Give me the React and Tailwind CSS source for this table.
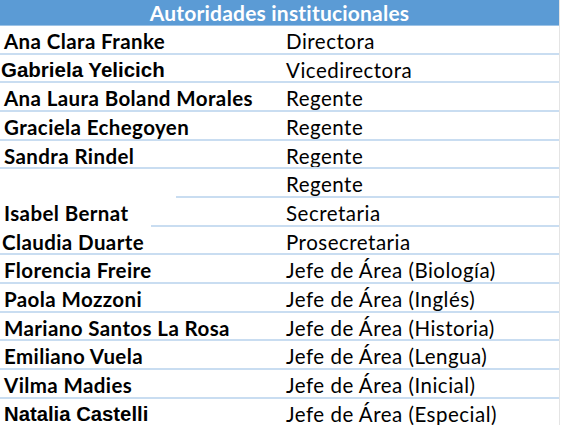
import React from 'react';

const rows = [
  { name: "Ana Clara Franke", role: "Directora" },
  { name: "Gabriela Yelicich", role: "Vicedirectora", arial: "text-[20.5px]", pl: "pl-[1px]" },
  { name: "Ana Laura Boland Morales", role: "Regente" },
  { name: "Graciela Echegoyen", role: "Regente" },
  { name: "Sandra Rindel", role: "Regente" },
  { name: "", role: "Regente", line: "ml-[176px]" },
  { name: "Isabel Bernat", role: "Secretaria", line: "ml-[151px]" },
  { name: "Claudia Duarte", role: "Prosecretaria", pl: "pl-[2px]" },
  { name: "Florencia Freire", role: "Jefe de Área (Biología)" },
  { name: "Paola Mozzoni", role: "Jefe de Área (Inglés)" },
  { name: "Mariano Santos La Rosa", role: "Jefe de Área (Historia)" },
  { name: "Emiliano Vuela", role: "Jefe de Área (Lengua)" },
  { name: "Vilma Madies", role: "Jefe de Área (Inicial)" },
  { name: "Natalia Castelli", role: "Jefe de Área (Especial)", arial: "text-[20.3px]" },
];

const App = () => {
  return (
    <div className="w-[561px] h-[425px] overflow-hidden bg-white font-['Lato',sans-serif] text-black">
      <div className="w-[560px] border-r border-[#e4e4e4]">
        <div className="h-[25px] bg-[#5b9bd5] flex items-center justify-center text-white font-bold text-[21px] tracking-[0.2px] leading-none">
          Autoridades institucionales
        </div>
        <div className="h-px bg-[#9dc3e6]" />
        {rows.map((row, i) => (
          <div key={i} className="h-[28.67px] flex flex-col">
            <div className="flex-1 flex items-end pb-[1px]">
              <div
                className={`w-[282px] shrink-0 ${row.pl || 'pl-[4px]'} font-bold leading-none ${row.arial ? `font-['Liberation_Sans',sans-serif] ${row.arial}` : 'text-[20.5px] tracking-[0.4px]'}`}
              >
                {row.name}
              </div>
              <div className="pl-[4px] text-[20.5px] tracking-[0.5px] leading-none">{row.role}</div>
            </div>
            <div className={`h-[2px] bg-[#c9ddf1] ${row.line || ''}`} />
          </div>
        ))}
      </div>
    </div>
  );
};

export default App;
